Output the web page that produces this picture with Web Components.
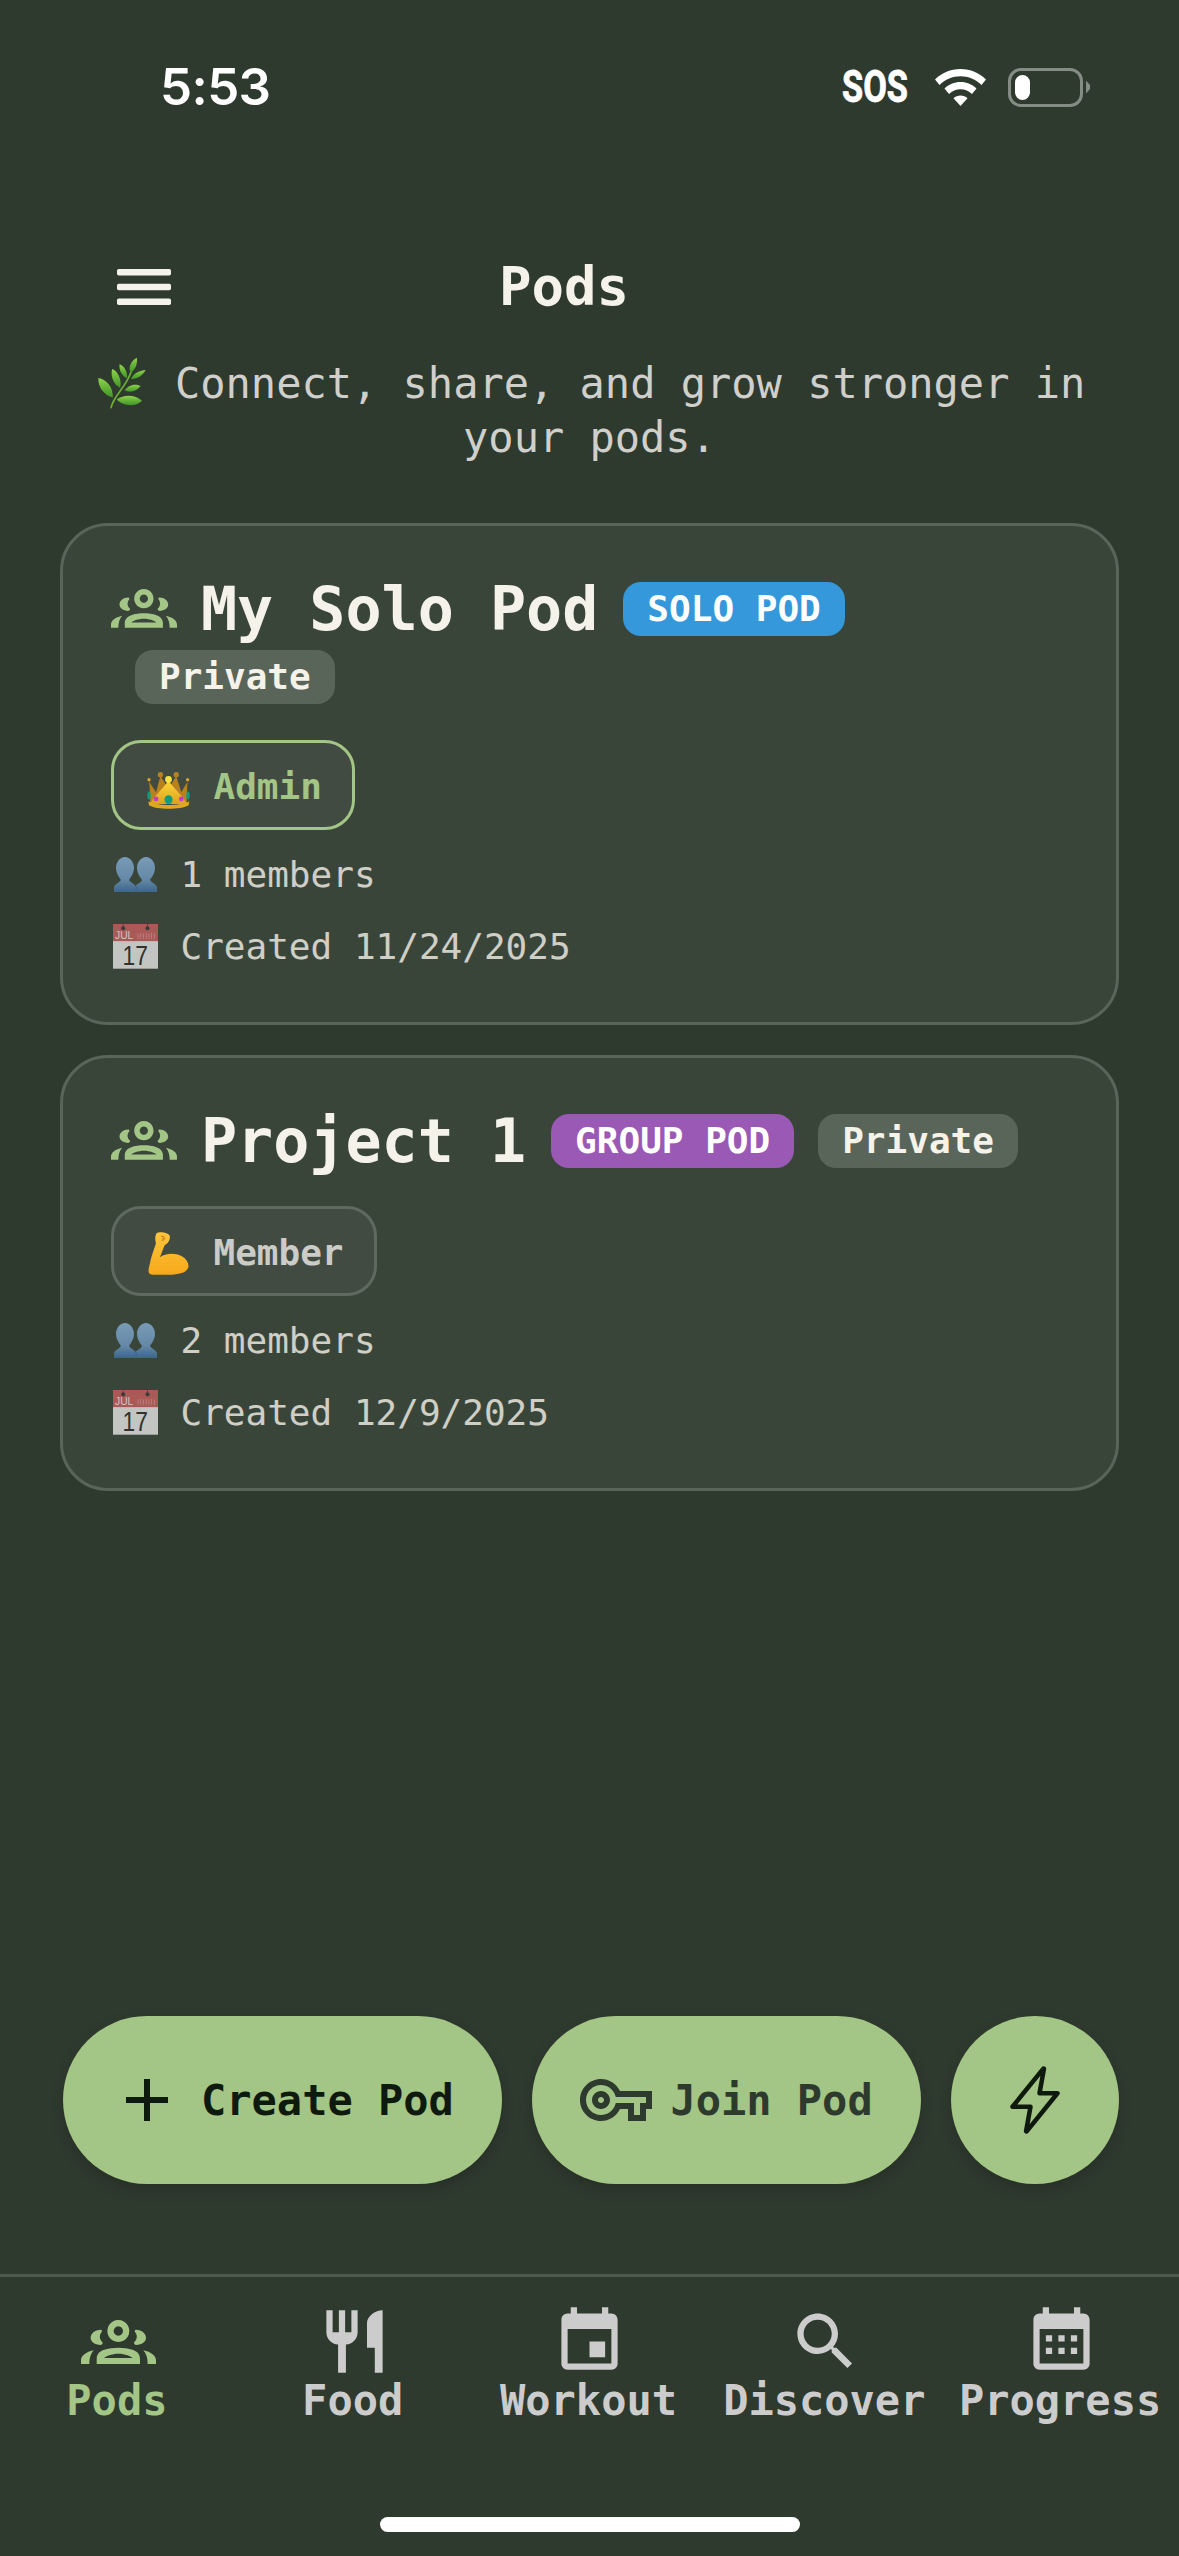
<!DOCTYPE html>
<html lang="en">
<head>
<meta charset="utf-8">
<title>Pods</title>
<style>
  html, body { margin: 0; padding: 0; background: #2f3a2f; }
  body { font-family: "DejaVu Sans Mono", monospace; color: #f5f2ea; }
</style>
</head>
<body>
<app-shell>
  <status-bar slot="top" time="5:53"></status-bar>
  <pods-header slot="top" heading="Pods"></pods-header>

  <pod-card name="My Solo Pod" kind="SOLO POD" kind-color="#3498db" role="Admin" role-emoji="crown" accent members="1 members" created="Created 11/24/2025"></pod-card>
  <pod-card name="Project 1" kind="GROUP POD" kind-color="#9b59b6" role="Member" role-emoji="muscle" members="2 members" created="Created 12/9/2025"></pod-card>

  <action-bar slot="actions"></action-bar>
  <bottom-nav slot="nav"></bottom-nav>
</app-shell>

<script>
const ICONS = {
  menu: '<rect x="3" y="6" width="18" height="2.2" rx=".6"/><rect x="3" y="10.9" width="18" height="2.2" rx=".6"/><rect x="3" y="15.8" width="18" height="2.2" rx=".6"/>',
  plus: '<path d="M19 13h-6v6h-2v-6H5v-2h6V5h2v6h6v2z"/>',
  key: '<path d="M22 19h-6v-4h-2.68c-1.14 2.42-3.6 4-6.32 4-3.86 0-7-3.14-7-7s3.14-7 7-7c2.72 0 5.17 1.58 6.32 4H24v6h-2v4zm-4-2h2v-4h2v-2H11.94l-.23-.67C11.01 8.34 9.11 7 7 7c-2.76 0-5 2.24-5 5s2.24 5 5 5c2.11 0 4.01-1.34 4.71-3.33l.23-.67H18v4zM7 15c-1.65 0-3-1.35-3-3s1.35-3 3-3 3 1.35 3 3-1.35 3-3 3zm0-4c-.55 0-1 .45-1 1s.45 1 1 1 1-.45 1-1-.45-1-1-1z"/>',
  restaurant: '<path d="M11 9H9V2H7v7H5V2H3v7c0 2.12 1.66 3.84 3.75 3.97V22h2.5v-9.03C11.34 12.84 13 11.12 13 9V2h-2v7zm5-3v8h2.5v8H21V2c-2.76 0-5 2.24-5 4z"/>',
  event: '<path d="M17 12h-5v5h5v-5zM16 1v2H8V1H6v2H5c-1.11 0-1.99.9-1.99 2L3 19c0 1.1.89 2 2 2h14c1.1 0 2-.9 2-2V5c0-1.1-.9-2-2-2h-1V1h-2zm3 18H5V8h14v11z"/>',
  search: '<path d="M15.5 14h-.79l-.28-.27C15.41 12.59 16 11.11 16 9.5 16 5.91 13.09 3 9.5 3S3 5.91 3 9.5 5.91 16 9.5 16c1.61 0 3.09-.59 4.23-1.57l.27.28v.79l5 4.99L20.49 19l-4.99-5zm-6 0C7.01 14 5 11.99 5 9.5S7.01 5 9.5 5 14 7.01 14 9.5 11.99 14 9.5 14z"/>',
  calendar: '<path d="M19 3h-1V1h-2v2H8V1H6v2H5c-1.11 0-1.99.9-1.99 2L3 19c0 1.1.89 2 2 2h14c1.1 0 2-.9 2-2V5c0-1.1-.9-2-2-2zm0 16H5V8h14v11zM7 10h2v2H7zm4 0h2v2h-2zm4 0h2v2h-2zm-8 4h2v2H7zm4 0h2v2h-2zm4 0h2v2h-2z"/>'
};
const GROUPS_ART = `
  <path fill-rule="evenodd" d="M175 75a33 33 0 1 0 .01 0zM175 94a14 14 0 1 1-.01 0z"/>
  <path d="M122 104C104 104 92 116 92 128C92 140 104 149 122 150C128 148 129 144 127 141C118 134 117 120 125 111C127 107 125 104 122 104Z"/>
  <path d="M228 104C246 104 258 116 258 128C258 140 246 149 228 150C222 148 221 144 223 141C232 134 233 120 225 111C223 107 225 104 228 104Z"/>
  <path fill-rule="evenodd" d="M110 207V191C110 178 118 170 130 165C145 160 160 158 175 158C190 158 205 160 220 165C232 170 240 178 240 191V207ZM132 189H218C214 184 195 176 175 176C155 176 136 184 132 189Z"/>
  <path d="M63 207V196C63 182 78 171 101 166C92 176 88 190 88 207Z"/>
  <path d="M288 207V196C288 182 273 171 250 166C259 176 263 190 263 207Z"/>`;

const EMOJI = {
  leaf: { vb: '30 45 155 165', art: `
    <defs><linearGradient id="lf" x1="0" y1="0" x2="0" y2="1"><stop offset="0" stop-color="#8ed24a"/><stop offset="1" stop-color="#3f9428"/></linearGradient></defs>
    <path d="M75 203C80 170 120 140 135 92" fill="none" stroke="#6fae35" stroke-width="5" stroke-linecap="round"/>
    <g fill="url(#lf)">
      <path d="M37 112C60 115 82 140 80 172C55 165 35 140 37 112Z"/>
      <path d="M78 85C95 90 108 120 102 142C85 135 72 110 78 85Z"/>
      <path d="M100 70C115 75 125 95 122 113C108 105 98 90 100 70Z"/>
      <path d="M152 50C155 70 145 90 133 95C125 80 135 58 152 50Z"/>
      <path d="M178 88C170 105 150 117 135 115C140 100 158 90 178 88Z"/>
      <path d="M163 137C150 155 130 158 115 150C125 135 145 127 163 137Z"/>
      <path d="M167 182C150 165 115 160 92 178C105 195 145 205 167 182Z"/>
    </g>` },
  crown: { vb: '132 634 140 122', art: `
    <defs><linearGradient id="cg" x1="0" y1="0" x2="0" y2="1"><stop offset="0" stop-color="#ffd83a"/><stop offset="1" stop-color="#dca21e"/></linearGradient></defs>
    <path d="M144 668C148 690 146 715 148 735H256C258 715 256 690 259 668L240 700L225 652L202 690L178 652L165 700Z" fill="#b9801f"/>
    <path d="M146 735C165 705 190 685 202 665C214 685 240 705 258 735Z" fill="url(#cg)"/>
    <path d="M142 727C170 742 235 742 264 727L262 739C240 753 165 753 144 739Z" fill="#dfa823"/>
    <circle cx="178" cy="648" r="8" fill="#b58223"/><circle cx="225" cy="648" r="8" fill="#b58223"/>
    <circle cx="202" cy="662" r="10" fill="#ffe23c"/><circle cx="144" cy="663" r="5" fill="#d9a42a"/><circle cx="259" cy="663" r="5" fill="#d9a42a"/>
    <ellipse cx="202" cy="722" rx="12" ry="13" fill="#0f9b7f"/>
    <circle cx="165" cy="720" r="7" fill="#c43cc4"/><circle cx="240" cy="720" r="7" fill="#c43cc4"/>
    <ellipse cx="144" cy="710" rx="5" ry="12" fill="#0f9b7f"/><ellipse cx="260" cy="710" rx="5" ry="12" fill="#0f9b7f"/>` },
  muscle: { vb: '141 90 130 138', art: `
    <defs><linearGradient id="mg" x1="0" y1="0" x2="0" y2="1"><stop offset="0" stop-color="#fdc63c"/><stop offset="1" stop-color="#f7a81a"/></linearGradient></defs>
    <path d="M170 100C178 94 205 97 210 108C212 118 205 130 195 135C190 145 185 160 180 172C195 160 225 158 245 168C262 176 270 195 265 205C258 220 230 225 200 224C180 224 160 226 150 222C143 218 146 205 150 190C155 165 162 150 168 130C165 118 165 108 170 100Z" fill="url(#mg)"/>
    <path d="M184 108l8 3m-4 4l8-1m-11 7l9-2" stroke="#b96d10" stroke-width="3" fill="none"/>` },
  busts: { vb: '0 0 43 35', art: `
    <defs><linearGradient id="bg" x1="0" y1="0" x2="0" y2="1"><stop offset="0" stop-color="#88b1d6"/><stop offset=".65" stop-color="#6f9ac2"/><stop offset="1" stop-color="#3d6e9e"/></linearGradient></defs>
    <g fill="url(#bg)">
      <path d="M32 0C37 0 41 5 41 11C41 16 38 20 36 23C38 26 42 27 43 30V35H21V30C22 27 27 26 28 23C26 20 23 16 23 11C23 5 27 0 32 0Z"/>
      <path d="M11 0C16 0 20 5 20 11C20 16 17 20 15 23C17 26 21 27 22 30V35H0V30C1 27 5 26 7 23C5 20 2 16 2 11C2 5 6 0 11 0Z"/>
    </g>
    <path d="M21 28l2 3-2 2" stroke="#2f5c88" stroke-width=".6" fill="none"/>` },
  calendar: { vb: '0 0 133 134', art: `
    <rect width="133" height="134" fill="#e6e6e6"/>
    <rect width="133" height="51" fill="#c65f5f"/>
    <rect y="132" width="133" height="2" fill="#9a9a9a"/>
    <circle cx="30" cy="13" r="6" fill="#3a3a3a"/><circle cx="102" cy="13" r="6" fill="#3a3a3a"/>
    <path d="M30 0v10M102 0v10" stroke="#3a3a3a" stroke-width="2"/>
    <g stroke="#dc9a9a" stroke-width="2.5"><path d="M74 44V28M82 44V26M90 44V28M98 44V26M106 44V28M114 44V26M122 44V28"/></g>
    <text x="6" y="45" textLength="54" lengthAdjust="spacingAndGlyphs" font-family="Liberation Sans, sans-serif" font-size="30" fill="#f3e4e4">JUL</text>
    <text x="28" y="122" textLength="75" lengthAdjust="spacingAndGlyphs" font-family="Liberation Sans, sans-serif" font-size="80" fill="#2f2f2f">17</text>` }
};

function tpl(html) { const t = document.createElement('template'); t.innerHTML = html; return t; }
function define(name, build) {
  customElements.define(name, class extends HTMLElement {
    connectedCallback() {
      if (this.shadowRoot) return;
      const root = this.attachShadow({ mode: 'open' });
      root.appendChild(tpl(build(this)).content.cloneNode(true));
    }
  });
}

define('ui-icon', el => {
  const s = el.getAttribute('size') || 72, n = el.getAttribute('name');
  const body = n === 'groups'
    ? `<svg width="${s}" height="${s * 132 / 225}" viewBox="63 75 225 132" fill="currentColor">${GROUPS_ART}</svg>`
    : n === 'bolt'
    ? `<svg width="${s}" height="${s}" viewBox="0 0 512 512" fill="none" stroke="currentColor" stroke-width="32" stroke-linejoin="round"><path d="M315.27 33L96 304h128l-31.51 173.23a2.36 2.36 0 002.33 2.77h0a2.36 2.36 0 001.89-.95L416 208H288l31.66-173.25a2.45 2.45 0 00-2.44-2.75h0a2.42 2.42 0 00-1.95 1z"/></svg>`
    : `<svg width="${s}" height="${s}" viewBox="0 0 24 24" fill="currentColor">${ICONS[n]}</svg>`;
  return `<style>:host{display:inline-flex;align-items:center;justify-content:center;flex:none;line-height:0}</style>${body}`;
});

define('emoji-art', el => {
  const e = EMOJI[el.getAttribute('name')];
  const w = el.getAttribute('w'), h = el.getAttribute('h');
  return `<style>:host{display:inline-flex;flex:none;align-items:center;justify-content:center;line-height:0;width:${el.getAttribute('box') || w}px;}
    svg{overflow:visible}</style>
    <svg width="${w}" height="${h}" viewBox="${e.vb}" preserveAspectRatio="none">${e.art}</svg>`;
});

define('app-shell', () => `<style>
  :host{display:flex;flex-direction:column;width:1179px;height:2556px;background:#2f3a2f;overflow:hidden;box-sizing:border-box;
    font-family:"DejaVu Sans Mono",monospace;color:#f5f2ea}
  .list{flex:1;display:flex;flex-direction:column;gap:30px;padding:0 60px;min-height:0}
</style>
<slot name="top"></slot>
<div class="list"><slot></slot></div>
<slot name="actions"></slot>
<slot name="nav"></slot>`);

define('status-bar', el => `<style>
  :host{display:flex;align-items:center;height:174px;box-sizing:border-box;padding:0 89px 0 160px;margin-bottom:81px;color:#fff}
  .bar{display:flex;align-items:center;justify-content:space-between;width:100%;height:44px}
  .time{font:600 51px/44px Inter,sans-serif;letter-spacing:-.6px}
  .right{display:flex;align-items:center}
  .sos{font:700 44px/44px Roboto,sans-serif;-webkit-text-stroke:.8px #fff;display:inline-block;width:66px;transform:scaleX(.78);transform-origin:left center;white-space:nowrap;margin-right:27px}
  .batt{width:75px;height:39px;box-sizing:border-box;border:3px solid #858c85;border-radius:13px;padding:4px;margin-left:22px;display:flex}
  .fill{width:15px;background:#fff;border-radius:8px}
  .cap{width:4px;height:13px;background:#858c85;margin-left:3px;clip-path:polygon(0 0,100% 35%,100% 65%,0 100%)}
</style>
<div class="bar"><span class="time">${el.getAttribute('time')}</span>
<div class="right"><span class="sos">SOS</span>
<svg width="51" height="37" viewBox="0 0 51 37" fill="#fff"><path d="M25.5 0C35.5 0 44 3.800 51 10.500L46.500 16C40.800 10.500 33.500 7.300 25.500 7.300S10.200 10.500 4.500 16L0 10.500C7 3.800 15.500 0 25.500 0Z"/><path d="M25.500 13C31.800 13 37.300 15.500 41.500 19.500L37 25C33.800 22 30 20.300 25.500 20.300S17.200 22 14 25L9.500 19.500C13.700 15.500 19.200 13 25.500 13Z"/><path d="M25.500 26.500C28.200 26.500 30.600 27.500 32.500 29.300L25.500 37L18.500 29.300C20.400 27.500 22.800 26.500 25.500 26.500Z"/></svg>
<div class="batt"><div class="fill"></div></div><div class="cap"></div></div></div>`);

define('pods-header', el => `<style>
  :host{display:block}
  .top{display:flex;align-items:center;height:63px;padding:0 231px 0 108px}
  h1{flex:1;margin:0;text-align:center;font:700 54px/63px "DejaVu Sans Mono",monospace;color:#f5f2ea}
  p{margin:38px 60px 57px;text-align:center;font:400 42px/54.6px "DejaVu Sans Mono",monospace;color:#cfcfcb}
  emoji-art{vertical-align:-12.5px}
</style>
<div class="top"><ui-icon name="menu" size="72"></ui-icon><h1>${el.getAttribute('heading')}</h1></div>
<p><emoji-art name="leaf" w="52" h="54" box="56" role="img" aria-label="🌿"></emoji-art> Connect, share, and grow stronger in your pods.</p>`);

define('pod-badge', el => `<style>
  :host{display:inline-block;height:54px;padding:0 24px;margin:6px 0 6px 24px;border-radius:18px;
    font:700 36px/54px "DejaVu Sans Mono",monospace;color:${el.getAttribute('fg') || '#fff'};background:${el.getAttribute('bg')};white-space:nowrap}
</style><slot></slot>`);

define('role-chip', el => {
  const accent = el.hasAttribute('accent');
  const crown = el.getAttribute('emoji') === 'crown';
  return `<style>
  :host{display:inline-flex;align-items:center;height:90px;box-sizing:border-box;padding:5px 30px 0;gap:21.5px;border-radius:30px;
    border:3px solid ${accent ? '#a3c585' : '#5f6a5f'};background:#414b41;
    font:700 36px/42px "DejaVu Sans Mono",monospace;color:${accent ? '#a3c585' : '#cbcbc8'}}
  emoji-art{margin-top:${crown ? 7 : 0}px}
  </style><emoji-art name="${el.getAttribute('emoji')}" w="${crown ? 47 : 43}" h="${crown ? 41 : 46}" box="48"></emoji-art><slot></slot>`;
});

define('meta-row', el => {
  const cal = el.getAttribute('emoji') === 'calendar';
  return `<style>
  :host{display:flex;align-items:center;gap:21.5px;height:48px;font:400 36px/48px "DejaVu Sans Mono",monospace;color:#f5f2ea;opacity:.8}
  </style><emoji-art name="${el.getAttribute('emoji')}" w="${cal ? 45 : 43}" h="${cal ? 45 : 35}" box="48"></emoji-art><slot></slot>`;
});

define('pod-card', el => {
  const a = n => el.getAttribute(n);
  return `<style>
  :host{display:block;box-sizing:border-box;background:#3a453a;border:3px solid #5a655a;border-radius:48px;padding:48px 52px 51px 48px;font-family:"DejaVu Sans Mono",monospace}
  .head{display:flex;flex-wrap:wrap;align-items:center;margin-bottom:30px}
  .name{font:700 60px/70px "DejaVu Sans Mono",monospace;color:#f5f2ea;margin:0 1px 0 24px;white-space:nowrap}
  ui-icon{color:#a3c585}
  .chip{display:flex;margin-bottom:21px}
  .meta{display:flex;flex-direction:column;gap:24px}
  </style>
  <div class="head"><ui-icon name="groups" size="66"></ui-icon><span class="name">${a('name')}</span>
    <pod-badge bg="${a('kind-color')}">${a('kind')}</pod-badge><pod-badge bg="#5a655a" fg="#f5f2ea">Private</pod-badge></div>
  <div class="chip"><role-chip emoji="${a('role-emoji')}" ${el.hasAttribute('accent') ? 'accent' : ''}>${a('role')}</role-chip></div>
  <div class="meta"><meta-row emoji="busts">${a('members')}</meta-row><meta-row emoji="calendar">${a('created')}</meta-row></div>`;
});

define('action-button', el => {
  const round = el.hasAttribute('round');
  return `<style>
  :host{display:inline-flex;align-items:center;justify-content:center;height:168px;box-sizing:border-box;border-radius:84px;background:#a3c585;
    ${round ? 'width:168px;' : 'padding:0 48px;gap:18px;'}color:${el.getAttribute('fg') || '#0f1a0f'};
    font:700 42px/49px "DejaVu Sans Mono",monospace;box-shadow:0 6px 14px rgba(0,0,0,.18);white-space:nowrap;flex:none}
  </style><ui-icon name="${el.getAttribute('icon')}" size="72"></ui-icon><slot></slot>`;
});

define('action-bar', () => `<style>
  :host{display:flex;gap:30.5px;padding:0 60px 0 63px;margin-bottom:90px}
</style>
<action-button icon="plus">Create Pod</action-button>
<action-button icon="key" fg="#2f3a2f">Join Pod</action-button>
<action-button icon="bolt" round></action-button>`);

define('nav-item', el => `<style>
  :host{flex:1;display:flex;flex-direction:column;align-items:center;min-width:0;color:${el.hasAttribute('active') ? '#a3c585' : '#cccccc'};
    font:700 42px/49px "DejaVu Sans Mono",monospace;white-space:nowrap}
  .i{height:75px;display:flex;align-items:center;margin:0 0 -3px 3px}
</style><div class="i"><ui-icon name="${el.getAttribute('icon')}" size="75"></ui-icon></div><slot></slot>`);

define('bottom-nav', () => `<style>
  :host{display:block;border-top:3px solid #4f5a4f;height:282px;box-sizing:border-box}
  .items{display:flex;padding:27px 0 0 0;margin-left:-1px;margin-right:1px}
  .home{width:420px;height:15px;border-radius:8px;background:#fff;margin:92px auto 0}
</style>
<div class="items">
  <nav-item icon="groups" active>Pods</nav-item>
  <nav-item icon="restaurant">Food</nav-item>
  <nav-item icon="event">Workout</nav-item>
  <nav-item icon="search">Discover</nav-item>
  <nav-item icon="calendar">Progress</nav-item>
</div>
<div class="home"></div>`);
</script>
</body>
</html>
